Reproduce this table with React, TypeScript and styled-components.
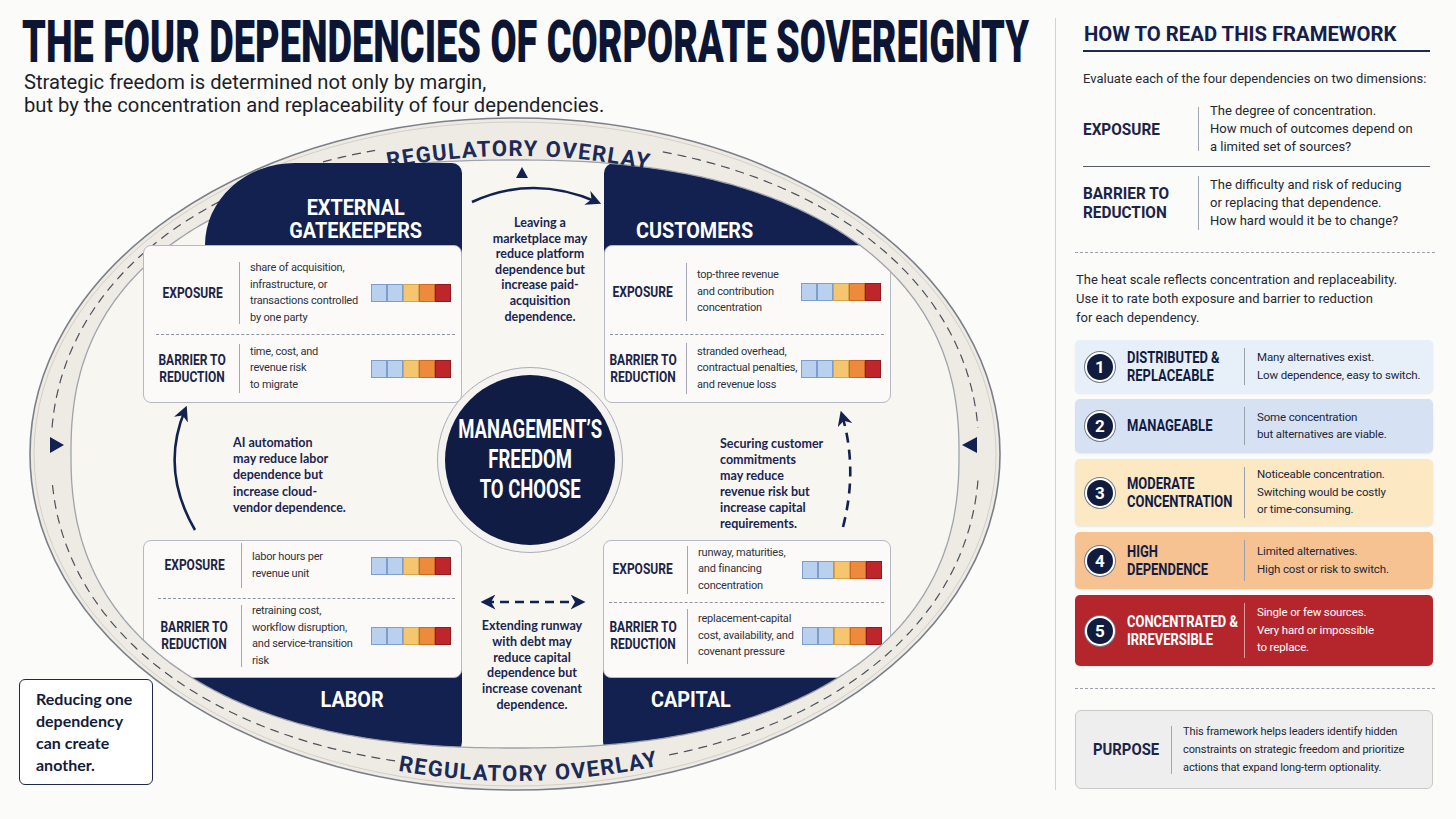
import React from "react";
import styled, { createGlobalStyle } from "styled-components";

// page y where the diagram canvas begins; nodes are given in page coordinates
const OY = 116;
const CW = 1055;
const CH = 703;

const NAVY = "#132150";
const INK = "#1b2447";
const PAGE = "#fbfbfa";
const BAND = "#eeebe4";
const INSIDE = "#f7f6f1";
const SANS = `Roboto, "Liberation Sans", Arial, sans-serif`;
const ROUND = `Lato, "Open Sans", "Liberation Sans", sans-serif`;

type Ell = { cx: number; cy: number; rx: number; ry: number };
type Sup = { cx: number; cy: number; a: number; b: number; n: number };

const OUTER: Ell = { cx: 515, cy: 454 - OY, rx: 485, ry: 336 };
// the inner edge of the band is a little squarer than the outer one
const INNER: Sup = { cx: 515, cy: 454 - OY, a: 444, b: 294, n: 2.35 };
const MIDDLE: Sup = { cx: 515, cy: 454 - OY, a: 464, b: 315, n: 2.15 };
const TOP_BASE: Ell = { cx: 515, cy: 454 - OY, rx: 447, ry: 298 };
const BOTTOM_BASE: Ell = { cx: 515, cy: 454 - OY, rx: 472, ry: 327 };

const ellipsePath = (e: Ell) =>
  `M${e.cx - e.rx} ${e.cy}A${e.rx} ${e.ry} 0 1 0 ${e.cx + e.rx} ${e.cy}A${e.rx} ${e.ry} 0 1 0 ${e.cx - e.rx} ${e.cy}Z`;

const at = (e: Ell, deg: number) => {
  const r = (deg * Math.PI) / 180;
  return `${(e.cx + e.rx * Math.cos(r)).toFixed(1)} ${(e.cy + e.ry * Math.sin(r)).toFixed(1)}`;
};

const arcPath = (e: Ell, from: number, to: number) => {
  const sweep = to > from ? 1 : 0;
  const large = Math.abs(to - from) > 180 ? 1 : 0;
  return `M${at(e, from)}A${e.rx} ${e.ry} 0 ${large} ${sweep} ${at(e, to)}`;
};

const supPoint = (s: Sup, deg: number) => {
  const t = (deg * Math.PI) / 180;
  const c = Math.cos(t);
  const si = Math.sin(t);
  const k = 2 / s.n;
  return [
    s.cx + s.a * Math.sign(c) * Math.pow(Math.abs(c), k),
    s.cy + s.b * Math.sign(si) * Math.pow(Math.abs(si), k),
  ];
};

const supPath = (s: Sup, from = 0, to = 360, closed = true) => {
  const steps = Math.max(8, Math.round(Math.abs(to - from) * 1.5));
  let d = "";
  for (let i = 0; i <= steps; i++) {
    const [x, y] = supPoint(s, from + ((to - from) * i) / steps);
    d += `${i ? "L" : "M"}${x.toFixed(1)} ${y.toFixed(1)}`;
  }
  return closed ? `${d}Z` : d;
};

// dashed centre line of the band, broken for the labels and the triangles
const DASHES: [number, number][] = [
  [287, 356],
  [364, 432.7],
  [103.5, 176],
  [184, 254],
];

const HEAT: [string, string][] = [
  ["#b9d0ee", "#7f9dca"],
  ["#b9d0ee", "#7f9dca"],
  ["#f5c56f", "#d6a44b"],
  ["#ee8a3b", "#cc6a22"],
  ["#bf262c", "#931b20"],
];

const GlobalStyle = createGlobalStyle`
  html, body { margin: 0; padding: 0; background: ${PAGE}; }
  body { font-family: ${SANS}; color: #1f2330; -webkit-font-smoothing: antialiased; }
  #root { width: 1456px; height: 819px; overflow: hidden; }
`;

const Page = styled.div`
  display: flex;
  width: 1456px;
  height: 819px;
  background: ${PAGE};
`;

const Main = styled.main`
  width: ${CW}px;
  display: flex;
  flex-direction: column;
`;

const Header = styled.header`
  height: ${OY}px;
  box-sizing: border-box;
  padding: 13px 0 0 22px;
`;

const Title = styled.h1`
  margin: 0;
  width: max-content;
  font: 900 59px/57px ${SANS};
  color: #0c1634;
  white-space: nowrap;
  transform: scaleX(0.642);
  transform-origin: left center;
`;

const Subtitle = styled.p`
  margin: 1px 0 0 2px;
  font: 400 20.2px/23px ${SANS};
  color: #1c1f2a;
`;

const Canvas = styled.div`
  position: relative;
  width: ${CW}px;
  height: ${CH}px;
  flex: none;
`;

const Art = styled.svg<{ $z: number }>`
  position: absolute;
  left: 0;
  top: 0;
  width: ${CW}px;
  height: ${CH}px;
  z-index: ${(p) => p.$z};
  pointer-events: none;
  overflow: visible;
`;

const BandText = styled.text`
  font: 700 22px ${SANS};
  letter-spacing: 1.4px;
  fill: #1b2a57;
`;

const Squeeze = styled.span<{ $k: number; $origin?: string }>`
  display: inline-block;
  white-space: nowrap;
  transform: scaleX(${(p) => p.$k});
  transform-origin: ${(p) => p.$origin ?? "center"} center;
`;

const Quad = styled.section<{ $x: number; $y: number; $w: number; $z: number }>`
  position: absolute;
  left: ${(p) => p.$x}px;
  top: ${(p) => p.$y - OY}px;
  width: ${(p) => p.$w}px;
  z-index: ${(p) => p.$z};
  display: flex;
  flex-direction: column;
`;

const Banner = styled.div<{
  $h: number;
  $inset: number;
  $radius: string;
  $pad: string;
  $justify: string;
  $align: string;
  $above: boolean;
}>`
  box-sizing: border-box;
  height: ${(p) => p.$h}px;
  margin-left: ${(p) => p.$inset}px;
  ${(p) => (p.$above ? "margin-bottom: -8px;" : "margin-top: -8px;")}
  padding: ${(p) => p.$pad};
  background: ${NAVY};
  border-radius: ${(p) => p.$radius};
  display: flex;
  justify-content: ${(p) => p.$justify};
  align-items: ${(p) => p.$align};
  color: #fff;
  font: 700 22px/23px ${SANS};
  text-align: center;
`;

const Body = styled.div<{ $h: number; $pl: number }>`
  position: relative;
  z-index: 1;
  box-sizing: border-box;
  height: ${(p) => p.$h}px;
  padding-left: ${(p) => p.$pl}px;
  background: #fbfaf8;
  border: 1.5px solid #b4b9c3;
  border-radius: 8px;
  display: flex;
  flex-direction: column;
`;

const Row = styled.div<{ $cols: string; $h?: number; $pt?: number; $pb?: number }>`
  display: grid;
  grid-template-columns: ${(p) => p.$cols};
  column-gap: 10px;
  align-items: center;
  box-sizing: border-box;
  ${(p) => (p.$h ? `height: ${p.$h}px; flex: none;` : "flex: 1;")}
  padding-top: ${(p) => p.$pt ?? 0}px;
  padding-bottom: ${(p) => p.$pb ?? 0}px;
`;

const Label = styled.div`
  display: flex;
  justify-content: center;
  font: 700 15px/17px ${SANS};
  color: ${INK};
  text-align: center;
`;

const Rule = styled.div<{ $h: number }>`
  width: 1px;
  height: ${(p) => p.$h}px;
  background: #a2a7b1;
`;

const Desc = styled.div`
  font: 400 11px/16.5px ${SANS};
  letter-spacing: -0.2px;
  color: #2e323c;
  white-space: nowrap;
`;

const Sep = styled.div`
  height: 0;
  margin-right: 6px;
  border-top: 1px dashed #8f95a1;
`;

const HeatBar = styled.div`
  display: flex;
`;

const Cell = styled.span<{ $c: string; $b: string }>`
  width: 16px;
  height: 18px;
  box-sizing: border-box;
  background: ${(p) => p.$c};
  border: 1px solid ${(p) => p.$b};
`;

const Ring = styled.div`
  position: absolute;
  z-index: 1;
  left: 437px;
  top: ${367 - OY}px;
  width: 186px;
  height: 186px;
  box-sizing: border-box;
  border-radius: 50%;
  background: #f4f3ef;
  border: 1.5px solid #a9aeb7;
  display: flex;
  align-items: center;
  justify-content: center;
`;

const Core = styled.div`
  width: 170px;
  height: 170px;
  border-radius: 50%;
  background: #101c44;
  display: flex;
  align-items: center;
  justify-content: center;
  color: #fff;
  font: 700 25px/30px ${SANS};
  text-align: center;
`;

const Note = styled.p<{ $x: number; $y: number; $w: number; $align: "left" | "center"; $lh: number }>`
  position: absolute;
  z-index: 1;
  margin: 0;
  left: ${(p) => p.$x}px;
  top: ${(p) => p.$y - OY}px;
  width: ${(p) => p.$w}px;
  font: 700 12.5px/${(p) => p.$lh}px ${ROUND};
  color: #1a2552;
  text-align: ${(p) => p.$align};
  white-space: nowrap;
`;

const Callout = styled.div`
  position: absolute;
  z-index: 3;
  left: 19px;
  top: ${679 - OY}px;
  width: 134px;
  height: 106px;
  box-sizing: border-box;
  padding: 8px 0 0 16px;
  border: 1.5px solid #1e2849;
  border-radius: 6px;
  background: #fff;
  font: 700 16px/22px ${ROUND};
  color: #131c3c;
`;

const VRule = styled.div`
  flex: none;
  width: 1px;
  height: 772px;
  margin-top: 18px;
  background: #cfd2d8;
`;

const Panel = styled.aside`
  width: 400px;
  box-sizing: border-box;
  padding: 22px 23px 0 19px;
  display: flex;
  flex-direction: column;
`;

const PanelTitle = styled.h2`
  margin: 0 3px 0 8px;
  padding: 0 0 3px 1px;
  border-bottom: 2px solid #1d2a52;
  font: 700 20.3px/25px ${SANS};
  color: #14204a;
  white-space: nowrap;
`;

const Lead = styled.p<{ $mt: number; $ml: number; $lh: number }>`
  margin: ${(p) => p.$mt}px 0 0 ${(p) => p.$ml}px;
  font: 400 13px/${(p) => p.$lh}px ${SANS};
  color: #262a34;
`;

const DimRow = styled.div<{ $h: number; $mt: number }>`
  display: grid;
  grid-template-columns: 104px 1px 1fr;
  column-gap: 11px;
  align-items: center;
  height: ${(p) => p.$h}px;
  margin: ${(p) => p.$mt}px 0 0 8px;
`;

const DimLabel = styled.div`
  font: 700 16.5px/19px ${SANS};
  color: ${INK};
`;

const DimText = styled.div`
  font: 400 13px/18px ${SANS};
  color: #23272f;
  white-space: nowrap;
`;

const PanelRule = styled.div`
  height: 1px;
  margin: 6px 3px 0 8px;
  background: #585c66;
`;

const Dashed = styled.div<{ $mt: number }>`
  margin: ${(p) => p.$mt}px -2px 0 0;
  border-top: 1.5px dashed #9ca0a8;
`;

const ScaleList = styled.div`
  display: flex;
  flex-direction: column;
  gap: 6px;
  margin-top: 13px;
`;

const ScaleRow = styled.div<{ $bg: string; $h: number }>`
  display: grid;
  grid-template-columns: 30px 105px 1px 1fr;
  column-gap: 12px;
  align-items: center;
  height: ${(p) => p.$h}px;
  box-sizing: border-box;
  padding-left: 10px;
  border-radius: 5px;
  background: ${(p) => p.$bg};
  box-shadow: 0 1px 2px rgba(0, 0, 0, 0.08);
`;

const Badge = styled.span`
  width: 30px;
  height: 30px;
  box-sizing: border-box;
  border-radius: 50%;
  background: #111b3e;
  border: 2px solid #fff;
  box-shadow: 0 0 0 1px #737a8b;
  color: #fff;
  font: 700 17px/26px ${SANS};
  text-align: center;
`;

const ScaleLabel = styled.div<{ $dark?: boolean }>`
  font: 700 16px/17.5px ${SANS};
  color: ${(p) => (p.$dark ? "#fff" : "#121c43")};
`;

const ScaleRule = styled.div<{ $h: number; $dark?: boolean }>`
  width: 1px;
  height: ${(p) => p.$h}px;
  background: ${(p) => (p.$dark ? "rgba(255,255,255,0.55)" : "#98a0ad")};
`;

const ScaleText = styled.div<{ $dark?: boolean }>`
  font: 400 11.5px/17.5px ${SANS};
  letter-spacing: -0.15px;
  color: ${(p) => (p.$dark ? "#fff" : "#22273a")};
  white-space: nowrap;
`;

const Purpose = styled.div`
  margin-top: 21px;
  height: 79px;
  box-sizing: border-box;
  display: grid;
  grid-template-columns: 67px 1px 1fr;
  column-gap: 11px;
  align-items: center;
  padding-left: 17px;
  background: #eeeeee;
  border: 1px solid #c9c9c9;
  border-radius: 6px;
`;

const PurposeText = styled.div`
  font: 400 11px/18px ${SANS};
  letter-spacing: -0.1px;
  color: #23272f;
  white-space: nowrap;
`;

type Dim = { label: string[]; text: string[]; rule: number; h?: number; pt?: number; pb?: number };
type BannerSpec = {
  h: number;
  inset: number;
  radius: string;
  pad: string;
  justify: string;
  align: string;
  origin: string;
  lines: string[];
};
type QuadSpec = {
  x: number;
  y: number;
  w: number;
  z: number;
  pl: number;
  cols: string;
  bodyH: number;
  above: boolean;
  banner: BannerSpec;
  rows: [Dim, Dim];
};

const BARRIER = ["BARRIER TO", "REDUCTION"];

const GATEKEEPERS: QuadSpec = {
  x: 143,
  y: 163,
  w: 319,
  z: 3,
  pl: 12,
  cols: "73px 1px 111px 80px",
  bodyH: 158,
  above: true,
  banner: {
    h: 90,
    inset: 62,
    radius: "90px 10px 0 0 / 82px 10px 0 0",
    pad: "0 0 11px 45px",
    justify: "center",
    align: "flex-end",
    origin: "center",
    lines: ["EXTERNAL", "GATEKEEPERS"],
  },
  rows: [
    {
      label: ["EXPOSURE"],
      text: ["share of acquisition,", "infrastructure, or", "transactions controlled", "by one party"],
      rule: 62,
      h: 88,
      pt: 6,
    },
    { label: BARRIER, text: ["time, cost, and", "revenue risk", "to migrate"], rule: 49 },
  ],
};

const CUSTOMERS: QuadSpec = {
  x: 604,
  y: 163,
  w: 287,
  z: 1,
  pl: 5,
  cols: "66px 1px 94px 80px",
  bodyH: 158,
  above: true,
  banner: {
    h: 90,
    inset: 0,
    radius: "10px 0 0 0",
    pad: "0 0 11px 32px",
    justify: "flex-start",
    align: "flex-end",
    origin: "left",
    lines: ["CUSTOMERS"],
  },
  rows: [
    {
      label: ["EXPOSURE"],
      text: ["top-three revenue", "and contribution", "concentration"],
      rule: 58,
      h: 88,
      pt: 4,
    },
    { label: BARRIER, text: ["stranded overhead,", "contractual penalties,", "and revenue loss"], rule: 51 },
  ],
};

const LABOR: QuadSpec = {
  x: 143,
  y: 540,
  w: 319,
  z: 1,
  pl: 14,
  cols: "73px 1px 109px 80px",
  bodyH: 138,
  above: false,
  banner: {
    h: 82,
    inset: 0,
    radius: "0 0 10px 0",
    pad: "18px 0 0 100px",
    justify: "center",
    align: "flex-start",
    origin: "center",
    lines: ["LABOR"],
  },
  rows: [
    { label: ["EXPOSURE"], text: ["labor hours per", "revenue unit"], rule: 45, h: 57, pb: 8 },
    {
      label: BARRIER,
      text: ["retraining cost,", "workflow disruption,", "and service-transition", "risk"],
      rule: 62,
      pb: 4,
    },
  ],
};

const CAPITAL: QuadSpec = {
  x: 603,
  y: 540,
  w: 288,
  z: 1,
  pl: 5,
  cols: "68px 1px 94px 80px",
  bodyH: 138,
  above: false,
  banner: {
    h: 82,
    inset: 0,
    radius: "0 0 0 10px",
    pad: "18px 0 0 48px",
    justify: "flex-start",
    align: "flex-start",
    origin: "left",
    lines: ["CAPITAL"],
  },
  rows: [
    {
      label: ["EXPOSURE"],
      text: ["runway, maturities,", "and financing", "concentration"],
      rule: 48,
      h: 61,
      pb: 4,
    },
    {
      label: BARRIER,
      text: ["replacement-capital", "cost, availability, and", "covenant pressure"],
      rule: 55,
      pb: 8,
    },
  ],
};

const SCALE = [
  {
    n: 1,
    label: ["DISTRIBUTED &", "REPLACEABLE"],
    desc: ["Many alternatives exist.", "Low dependence, easy to switch."],
    bg: "#e7eff9",
    h: 53,
  },
  { n: 2, label: ["MANAGEABLE"], desc: ["Some concentration", "but alternatives are viable."], bg: "#d6e2f3", h: 54 },
  {
    n: 3,
    label: ["MODERATE", "CONCENTRATION"],
    desc: ["Noticeable concentration.", "Switching would be costly", "or time-consuming."],
    bg: "#fce8c3",
    h: 67,
  },
  {
    n: 4,
    label: ["HIGH", "DEPENDENCE"],
    desc: ["Limited alternatives.", "High cost or risk to switch."],
    bg: "#f6c291",
    h: 57,
  },
  {
    n: 5,
    label: ["CONCENTRATED &", "IRREVERSIBLE"],
    desc: ["Single or few sources.", "Very hard or impossible", "to replace."],
    bg: "#b4262c",
    h: 71,
    dark: true,
  },
];

const lines = (items: string[]) =>
  items.map((t, i) => (
    <React.Fragment key={i}>
      {i > 0 && <br />}
      {t}
    </React.Fragment>
  ));

function Heat() {
  return (
    <HeatBar>
      {HEAT.map(([c, b], i) => (
        <Cell key={i} $c={c} $b={b} />
      ))}
    </HeatBar>
  );
}

function DimensionRow({ dim, cols }: { dim: Dim; cols: string }) {
  return (
    <Row $cols={cols} $h={dim.h} $pt={dim.pt} $pb={dim.pb}>
      <Label>
        <Squeeze $k={0.8}>{lines(dim.label)}</Squeeze>
      </Label>
      <Rule $h={dim.rule} />
      <Desc>{lines(dim.text)}</Desc>
      <Heat />
    </Row>
  );
}

function Quadrant({ spec }: { spec: QuadSpec }) {
  const b = spec.banner;
  const banner = (
    <Banner
      $h={b.h}
      $inset={b.inset}
      $radius={b.radius}
      $pad={b.pad}
      $justify={b.justify}
      $align={b.align}
      $above={spec.above}
    >
      <Squeeze $k={0.9} $origin={b.origin}>
        {lines(b.lines)}
      </Squeeze>
    </Banner>
  );
  return (
    <Quad $x={spec.x} $y={spec.y} $w={spec.w} $z={spec.z}>
      {spec.above && banner}
      <Body $h={spec.bodyH} $pl={spec.pl}>
        <DimensionRow dim={spec.rows[0]} cols={spec.cols} />
        <Sep />
        <DimensionRow dim={spec.rows[1]} cols={spec.cols} />
      </Body>
      {!spec.above && banner}
    </Quad>
  );
}

function EllipseBase() {
  return (
    <Art $z={0} viewBox={`0 0 ${CW} ${CH}`}>
      <path d={ellipsePath(OUTER)} fill={BAND} />
      <path d={supPath(INNER)} fill={INSIDE} />
    </Art>
  );
}

function Arrows() {
  return (
    <Art $z={1} viewBox={`0 0 ${CW} ${CH}`}>
      <defs>
        <marker
          id="head"
          viewBox="0 0 10 10"
          refX="7"
          refY="5"
          markerWidth="15"
          markerHeight="15"
          markerUnits="userSpaceOnUse"
          orient="auto-start-reverse"
        >
          <path d="M0 0L10 5L0 10L3 5Z" fill={NAVY} />
        </marker>
      </defs>
      <polygon points="522,51 528,62 516,62" fill={NAVY} />
      <path d="M472 86Q533 58 597 86" fill="none" stroke={NAVY} strokeWidth={2.6} markerEnd="url(#head)" />
      <path d="M195 414Q160 354 185 294" fill="none" stroke={NAVY} strokeWidth={2.6} markerEnd="url(#head)" />
      <path
        d="M843 411Q858 353 842 299"
        fill="none"
        stroke={NAVY}
        strokeWidth={2.6}
        strokeDasharray="10 7"
        markerEnd="url(#head)"
      />
      <path
        d="M485 486H581"
        fill="none"
        stroke={NAVY}
        strokeWidth={2.4}
        strokeDasharray="9 6"
        markerStart="url(#head)"
        markerEnd="url(#head)"
      />
    </Art>
  );
}

function Overlay() {
  return (
    <Art $z={2} viewBox={`0 0 ${CW} ${CH}`}>
      <defs>
        <path id="reg-top" d={arcPath(TOP_BASE, 240.5, 300.5)} />
        <path id="reg-bottom" d={arcPath(BOTTOM_BASE, 118.2, 58.2)} />
      </defs>
      <path d={`M0 0H${CW}V${CH}H0Z${ellipsePath(OUTER)}`} fill={PAGE} fillRule="evenodd" />
      <path d={`${ellipsePath(OUTER)}${supPath(INNER)}`} fill={BAND} fillRule="evenodd" />
      <path d={ellipsePath(OUTER)} fill="none" stroke="#7a7f8a" strokeWidth={1.6} />
      <path
        d={ellipsePath({ ...OUTER, rx: OUTER.rx - 4, ry: OUTER.ry - 4 })}
        fill="none"
        stroke="#d3cfc7"
        strokeWidth={1}
      />
      <path d={supPath(INNER)} fill="none" stroke="#9ea3ac" strokeWidth={1.3} />
      {DASHES.map(([a, b]) => (
        <path
          key={a}
          d={supPath(MIDDLE, a, b, false)}
          fill="none"
          stroke="#4b505c"
          strokeWidth={1.2}
          strokeDasharray="9 6"
        />
      ))}
      <BandText textAnchor="middle">
        <textPath href="#reg-top" startOffset="50%">
          REGULATORY OVERLAY
        </textPath>
      </BandText>
      <BandText textAnchor="middle">
        <textPath href="#reg-bottom" startOffset="50%">
          REGULATORY OVERLAY
        </textPath>
      </BandText>
      <polygon points="50,321 50,337 64,329" fill={NAVY} />
      <polygon points="977,321 977,337 962,329" fill={NAVY} />
    </Art>
  );
}

function Diagram() {
  return (
    <Canvas>
      <EllipseBase />
      <Quadrant spec={CUSTOMERS} />
      <Quadrant spec={LABOR} />
      <Quadrant spec={CAPITAL} />
      <Ring>
        <Core>
          <Squeeze $k={0.74}>{lines(["MANAGEMENT’S", "FREEDOM", "TO CHOOSE"])}</Squeeze>
        </Core>
      </Ring>
      <Note $x={475} $y={215} $w={130} $align="center" $lh={15.6}>
        {lines([
          "Leaving a",
          "marketplace may",
          "reduce platform",
          "dependence but",
          "increase paid-",
          "acquisition",
          "dependence.",
        ])}
      </Note>
      <Note $x={233} $y={435} $w={130} $align="left" $lh={16.2}>
        {lines(["AI automation", "may reduce labor", "dependence but", "increase cloud-", "vendor dependence."])}
      </Note>
      <Note $x={720} $y={436} $w={120} $align="left" $lh={16}>
        {lines([
          "Securing customer",
          "commitments",
          "may reduce",
          "revenue risk but",
          "increase capital",
          "requirements.",
        ])}
      </Note>
      <Note $x={467} $y={618} $w={130} $align="center" $lh={15.8}>
        {lines([
          "Extending runway",
          "with debt may",
          "reduce capital",
          "dependence but",
          "increase covenant",
          "dependence.",
        ])}
      </Note>
      <Arrows />
      <Overlay />
      <Quadrant spec={GATEKEEPERS} />
      <Callout>{lines(["Reducing one", "dependency", "can create", "another."])}</Callout>
    </Canvas>
  );
}

function Framework() {
  return (
    <Panel>
      <PanelTitle>HOW TO READ THIS FRAMEWORK</PanelTitle>
      <Lead $mt={18} $ml={8} $lh={18}>
        Evaluate each of the four dependencies on two dimensions:
      </Lead>
      <DimRow $h={62} $mt={10}>
        <DimLabel>
          <Squeeze $k={0.93} $origin="left">
            EXPOSURE
          </Squeeze>
        </DimLabel>
        <Rule $h={44} />
        <DimText>
          {lines(["The degree of concentration.", "How much of outcomes depend on", "a limited set of sources?"])}
        </DimText>
      </DimRow>
      <PanelRule />
      <DimRow $h={60} $mt={6}>
        <DimLabel>
          <Squeeze $k={0.93} $origin="left">
            {lines(BARRIER)}
          </Squeeze>
        </DimLabel>
        <Rule $h={54} />
        <DimText>
          {lines([
            "The difficulty and risk of reducing",
            "or replacing that dependence.",
            "How hard would it be to change?",
          ])}
        </DimText>
      </DimRow>
      <Dashed $mt={19} />
      <Lead $mt={17} $ml={1} $lh={19}>
        {lines([
          "The heat scale reflects concentration and replaceability.",
          "Use it to rate both exposure and barrier to reduction",
          "for each dependency.",
        ])}
      </Lead>
      <ScaleList>
        {SCALE.map((s) => (
          <ScaleRow key={s.n} $bg={s.bg} $h={s.h}>
            <Badge>{s.n}</Badge>
            <ScaleLabel $dark={s.dark}>
              <Squeeze $k={0.81} $origin="left">
                {lines(s.label)}
              </Squeeze>
            </ScaleLabel>
            <ScaleRule $h={s.h - 16} $dark={s.dark} />
            <ScaleText $dark={s.dark}>{lines(s.desc)}</ScaleText>
          </ScaleRow>
        ))}
      </ScaleList>
      <Dashed $mt={22} />
      <Purpose>
        <DimLabel>
          <Squeeze $k={0.9} $origin="left">
            PURPOSE
          </Squeeze>
        </DimLabel>
        <Rule $h={48} />
        <PurposeText>
          {lines([
            "This framework helps leaders identify hidden",
            "constraints on strategic freedom and prioritize",
            "actions that expand long-term optionality.",
          ])}
        </PurposeText>
      </Purpose>
    </Panel>
  );
}

export default function App() {
  return (
    <>
      <GlobalStyle />
      <Page>
        <Main>
          <Header>
            <Title>THE FOUR DEPENDENCIES OF CORPORATE SOVEREIGNTY</Title>
            <Subtitle>
              Strategic freedom is determined not only by margin,
              <br />
              but by the concentration and replaceability of four dependencies.
            </Subtitle>
          </Header>
          <Diagram />
        </Main>
        <VRule />
        <Framework />
      </Page>
    </>
  );
}
